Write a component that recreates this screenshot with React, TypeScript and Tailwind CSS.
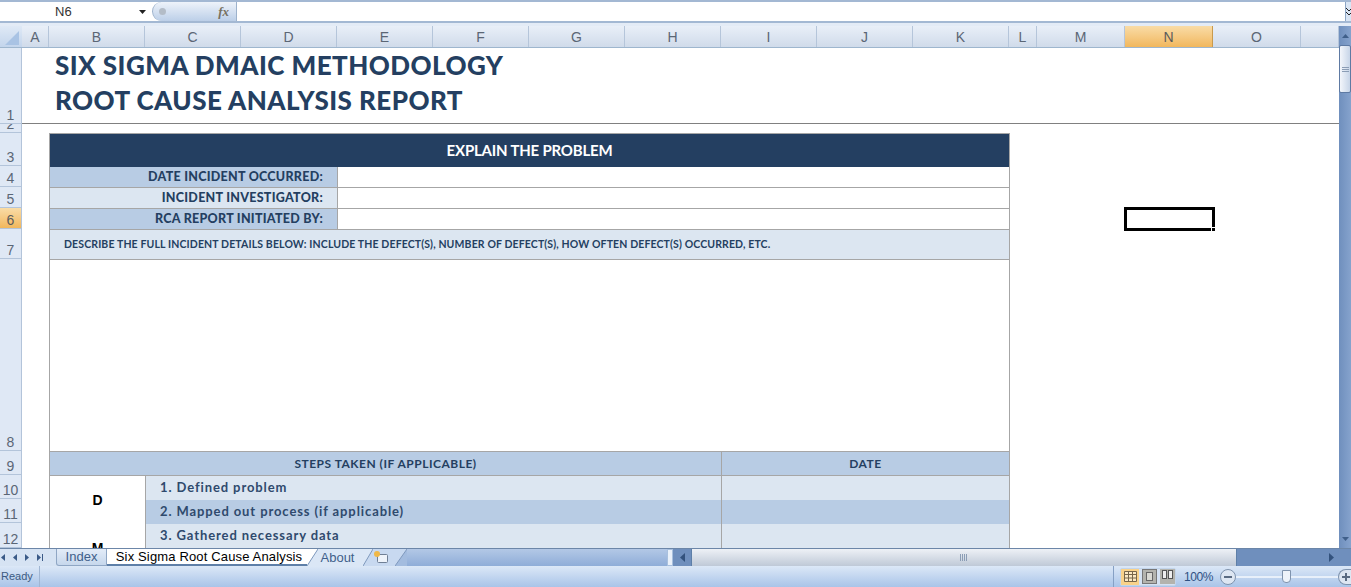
const columns = [
  { name: 'A', width: 'w-[27px]' },
  { name: 'B', width: 'w-[96px]' },
  { name: 'C', width: 'w-[96px]' },
  { name: 'D', width: 'w-[96px]' },
  { name: 'E', width: 'w-[96px]' },
  { name: 'F', width: 'w-[96px]' },
  { name: 'G', width: 'w-[96px]' },
  { name: 'H', width: 'w-[96px]' },
  { name: 'I', width: 'w-[96px]' },
  { name: 'J', width: 'w-[96px]' },
  { name: 'K', width: 'w-[96px]' },
  { name: 'L', width: 'w-[28px]' },
  { name: 'M', width: 'w-[88px]' },
  { name: 'N', width: 'w-[88px]' },
  { name: 'O', width: 'w-[88px]' },
  { name: '', width: 'w-[38px]' },
];

const rows = [
  { name: '1', height: 'h-[76px]' },
  { name: '2', height: 'h-[9px]' },
  { name: '3', height: 'h-[33px]' },
  { name: '4', height: 'h-[21px]' },
  { name: '5', height: 'h-[21px]' },
  { name: '6', height: 'h-[21px]' },
  { name: '7', height: 'h-[30px]' },
  { name: '8', height: 'h-[192px]' },
  { name: '9', height: 'h-[24px]' },
  { name: '10', height: 'h-[24px]' },
  { name: '11', height: 'h-[24px]' },
  { name: '12', height: 'h-[25px]' },
];

function FormulaBar() {
  return (
    <div className="h-[26px] bg-[#e3ebf6]">
      <div className="flex h-[23px] border-y-2 border-[#a3b8d3] bg-white">
        <div className="flex w-[152px] items-center pl-[55px] pt-[1px] text-[13px] text-[#333]">
          <span className="flex-1">N6</span>
          <svg width="7" height="4" viewBox="0 0 7 4" className="mr-[6px]">
            <path d="M0 0h7L3.500 4z" fill="#222" />
          </svg>
        </div>
        <div className="flex w-[85px] items-center rounded-l-[11px] border-x border-[#9db2cc] bg-gradient-to-b from-[#eef3fa] to-[#bccfe8] pl-[6px] pr-[7px]">
          <span className="h-[7px] w-[7px] rounded-full bg-[#b3bcc7]" />
          <span className="ml-auto font-['Liberation_Serif',serif] text-[13px] font-bold italic leading-none text-[#77715f]">fx</span>
        </div>
        <div className="flex-1" />
        <div className="flex w-[6px] items-center justify-center overflow-hidden border-l border-[#8ea6c4] bg-[#d9e5f4]">
          <svg width="6" height="10" viewBox="0 0 6 10" className="shrink-0">
            <path d="M0 1l3 3 3-3M0 5l3 3 3-3" stroke="#222" fill="none" />
          </svg>
        </div>
      </div>
    </div>
  );
}

function ColumnHeader() {
  return (
    <div className="flex h-[22px] border-b border-[#9eb6ce]">
      <div className="relative w-[22px] bg-gradient-to-b from-[#dfe9f6] to-[#c3d5ec]">
        <svg width="14" height="14" viewBox="0 0 14 14" className="absolute bottom-[2px] right-[3px]">
          <path d="M14 0v14H0z" fill="#a9c3e4" />
        </svg>
      </div>
      {columns.map((col) =>
        col.name === 'N' ? (
          <div
            key="N"
            className={`${col.width} flex items-center justify-center border-r border-[#c99a4d] bg-gradient-to-b from-[#f9dca6] to-[#f1b75c] pt-[1px] text-[14px] text-[#5b5b5b]`}
          >
            N
          </div>
        ) : (
          <div
            key={col.name || 'rest'}
            className={`${col.width} flex items-center justify-center border-r border-[#b5c5da] bg-gradient-to-b from-[#e9eff8] to-[#d0dbea] pt-[1px] text-[14px] text-[#5b6675]`}
          >
            {col.name}
          </div>
        ),
      )}
    </div>
  );
}

function RowHeader() {
  return (
    <div className="flex w-[22px] flex-col bg-[#dfe8f5]">
      {rows.map((row) => (
        <div
          key={row.name}
          className={`${row.height} flex shrink-0 items-end justify-center overflow-hidden border-b border-r border-[#b3c4da] pb-[1px] text-[14px] leading-[14px] ${
            row.name === '6' ? 'bg-gradient-to-b from-[#f9dca6] to-[#f1b75c] text-[#5b5b5b]' : 'text-[#5b6675]'
          }`}
        >
          {row.name}
        </div>
      ))}
    </div>
  );
}

function LabelRow({ label, dark }: { label: string; dark?: boolean }) {
  return (
    <div className="grid h-[21px] grid-cols-[287px_672px] border-b border-[#a6a6a6]">
      <div
        className={`flex items-center justify-end pr-[14px] text-[12.500px] font-black tracking-[0.27px] ${
          dark ? 'bg-[#b8cce4]' : 'bg-[#dce6f1]'
        }`}
      >
        {label}
      </div>
      <div className="border-l border-[#a6a6a6] bg-white" />
    </div>
  );
}

function StepCells({ text, dark }: { text: string; dark?: boolean }) {
  const fill = dark ? 'bg-[#b8cce4]' : 'bg-[#dce6f1]';
  return (
    <>
      <div className={`flex items-center border-l border-[#a6a6a6] pl-[14px] text-[13px] font-bold tracking-[0.9px] text-[#2f4a6d] ${fill}`}>
        {text}
      </div>
      <div className={`border-l border-[#a6a6a6] ${fill}`} />
    </>
  );
}

function Sheet() {
  return (
    <div className="relative flex-1 overflow-hidden bg-white font-['Lato',sans-serif] text-[#243f61]">
      <div className="h-[76px] border-b border-[#808080] pl-[33px] text-[26px] font-black leading-[35px] tracking-[0.45px]">
        <div>SIX SIGMA DMAIC METHODOLOGY</div>
        <div>ROOT CAUSE ANALYSIS REPORT</div>
      </div>
      <div className="ml-[27px] mt-[9px] w-[961px] border-x border-t border-[#a6a6a6]">
        <div className="flex h-[33px] items-center justify-center bg-[#243f61] text-[15px] font-bold tracking-[-0.2px] text-white">
          EXPLAIN THE PROBLEM
        </div>
        <LabelRow label="DATE INCIDENT OCCURRED:" dark />
        <LabelRow label="INCIDENT INVESTIGATOR:" />
        <LabelRow label="RCA REPORT INITIATED BY:" dark />
        <div className="flex h-[30px] items-center border-b border-[#a6a6a6] bg-[#dce6f1] pl-[14px] text-[10.500px] font-bold tracking-[0.13px]">
          DESCRIBE THE FULL INCIDENT DETAILS BELOW: INCLUDE THE DEFECT(S), NUMBER OF DEFECT(S), HOW OFTEN DEFECT(S) OCCURRED, ETC.
        </div>
        <div className="h-[192px] border-b border-[#a6a6a6] bg-white" />
        <div className="grid h-[24px] grid-cols-[671px_288px] border-b border-[#a6a6a6] bg-[#b8cce4] text-[12px] font-bold tracking-[0.5px]">
          <div className="flex items-center justify-center">STEPS TAKEN (IF APPLICABLE)</div>
          <div className="flex items-center justify-center border-l border-[#a6a6a6]">DATE</div>
        </div>
        <div className="grid grid-cols-[95px_576px_288px] grid-rows-[24px_24px_24px_24px]">
          <div className="row-span-2 flex items-center justify-center bg-white font-['Liberation_Sans',sans-serif] text-[14px] font-bold text-black">
            D
          </div>
          <StepCells text="1. Defined problem" />
          <StepCells text="2. Mapped out process (if applicable)" dark />
          <div className="row-span-2 flex items-center justify-center bg-white font-['Liberation_Sans',sans-serif] text-[14px] font-bold text-black">
            M
          </div>
          <StepCells text="3. Gathered necessary data" />
          <StepCells text="" dark />
        </div>
      </div>
      <div className="absolute left-[1102px] top-[159px] h-[24px] w-[91px] border-[3px] border-black">
        <div className="absolute -bottom-[4px] -right-[4px] h-[5px] w-[5px] border border-white bg-black" />
      </div>
    </div>
  );
}

function VerticalScrollbar() {
  return (
    <div className="flex w-[12px] flex-col bg-gradient-to-r from-[#6f8fbd] to-[#86a3cd]">
      <div className="flex h-[19px] items-center justify-center">
        <svg width="7" height="4" viewBox="0 0 7 4">
          <path d="M3.500 0L7 4H0z" fill="#3f5f8a" />
        </svg>
      </div>
      <div className="flex h-[48px] flex-col items-center justify-center gap-[1px] rounded-[2px] border border-[#5e7aa3] bg-gradient-to-r from-[#f3f6fb] to-[#c7d5e8]">
        <div className="h-px w-[7px] bg-[#8b9db5]" />
        <div className="h-px w-[7px] bg-[#8b9db5]" />
        <div className="h-px w-[7px] bg-[#8b9db5]" />
      </div>
      <div className="flex-1" />
      <div className="flex h-[18px] items-center justify-center">
        <svg width="7" height="4" viewBox="0 0 7 4">
          <path d="M0 0h7L3.500 4z" fill="#3f5f8a" />
        </svg>
      </div>
    </div>
  );
}

function NavArrows() {
  return (
    <div className="flex w-[56px] items-center gap-[8px] pl-[1px] text-[#3a5a87]">
      <svg width="4" height="7" viewBox="0 0 4 7"><path d="M4 0v7L0 3.500z" fill="currentColor" /></svg>
      <svg width="4" height="7" viewBox="0 0 4 7"><path d="M4 0v7L0 3.500z" fill="currentColor" /></svg>
      <svg width="4" height="7" viewBox="0 0 4 7"><path d="M0 0v7l4-3.500z" fill="currentColor" /></svg>
      <svg width="6" height="7" viewBox="0 0 6 7"><path d="M0 0v7l4-3.500zM5 0h1v7H5z" fill="currentColor" /></svg>
    </div>
  );
}

// slanted separator between two sheet tabs
function TabSlant({ width, left, right }: { width: number; left: string; right: string }) {
  return (
    <svg width={width} height="17" viewBox={`0 0 ${width} 17`} className="shrink-0">
      <path d={`M0 0H${width}L0 17z`} fill={left} />
      <path d={`M${width} 0V17H0z`} fill={right} />
      <path d={`M${width} 0L0 17`} stroke="#7f99bd" fill="none" />
    </svg>
  );
}

function TabBar() {
  return (
    <div className="flex h-[18px] border-t border-[#6c86a8] bg-[#d6e3f3] font-['Liberation_Sans',sans-serif]">
      <div className="flex w-[667px] shrink-0">
        <NavArrows />
        <div className="flex w-[51px] items-center justify-center rounded-bl-[3px] border-x border-b border-[#8fa6c4] bg-gradient-to-b from-[#e3ecf8] to-[#c6d7ec] text-[13px] text-[#3f5f8a]">
          Index
        </div>
        <div className="flex w-[200px] items-center justify-center whitespace-nowrap border-b-2 border-[#5e7fa8] bg-white pl-[4px] text-[13px] tracking-[0.15px] text-black">
          Six Sigma Root Cause Analysis
        </div>
        <TabSlant width={11} left="#ffffff" right="#dbe7f6" />
        <div className="flex w-[45px] items-center justify-center bg-[#dbe7f6] pr-[6px] text-[13px] text-[#3f5f8a]">
          About
        </div>
        <TabSlant width={10} left="#dbe7f6" right="#c8d9f0" />
        <div className="flex w-[22px] items-center bg-[#c8d9f0]">
          <svg width="16" height="15" viewBox="0 0 16 15">
            <rect x="4.500" y="4.500" width="10" height="8" rx="1" fill="#eef3fa" stroke="#6f7f95" />
            <circle cx="4" cy="4" r="3" fill="#f0b848" />
          </svg>
        </div>
        <TabSlant width={12} left="#c8d9f0" right="#a3bcdf" />
        <div className="flex-1 bg-gradient-to-b from-[#b3c8e6] to-[#8fadd8]" />
      </div>
      <div className="flex w-[6px] shrink-0 justify-center bg-[#6f8fbd]">
        <div className="w-[6px] border border-[#a8c0de] bg-[#eaf1fa]" />
      </div>
      <div className="flex w-[18px] shrink-0 items-center justify-center bg-[#6f8fbd] text-[#33527d]">
        <svg width="5" height="9" viewBox="0 0 5 9"><path d="M5 0v9L0 4.500z" fill="currentColor" /></svg>
      </div>
      <div className="flex w-[546px] shrink-0 items-center justify-center border-x border-[#5e7fa8] bg-gradient-to-b from-[#eef1f6] to-[#bfc9d7]">
        <div className="h-[7px] w-[8px] bg-[repeating-linear-gradient(90deg,#8b9db5_0,#8b9db5_1px,transparent_1px,transparent_2px)]" />
      </div>
      <div className="flex flex-1 items-center justify-end bg-[#6f8fbd] pr-[17px] text-[#33527d]">
        <svg width="5" height="9" viewBox="0 0 5 9"><path d="M0 0v9l5-4.500z" fill="currentColor" /></svg>
      </div>
    </div>
  );
}

function StatusBar() {
  return (
    <div className="flex h-[21px] items-center bg-gradient-to-b from-[#dce8f7] to-[#a9c4e8] font-['Liberation_Sans',sans-serif] text-[11px] text-[#3b5a82]">
      <div className="flex h-full w-[40px] items-center border-r border-[#a0b6d3] pl-[1px]">Ready</div>
      <div className="flex-1" />
      <div className="flex h-full items-center border-l border-[#86a0c4] pl-[6px]">
        <div className="flex h-[18px] w-[56px] items-center gap-[3px] rounded-[2px] border border-[#c2d4ea] bg-[#d5e2f2]">
          <div className="flex h-full w-[18px] items-center justify-center bg-[#f9d28a]">
            <svg width="13" height="11" viewBox="0 0 13 11">
              <path d="M.500.500h12v10H.500zM.500 3.500h12M.500 7h12M4.500.500v10M8.500.500v10" stroke="#77664a" fill="#fbe9c4" />
            </svg>
          </div>
          <div className="flex h-[15px] w-[15px] items-center justify-center border border-[#777] bg-[#b3b3ad]">
            <div className="h-[9px] w-[7px] border border-[#666] bg-[#d9d9d3]" />
          </div>
          <div className="flex h-[15px] w-[15px] items-start justify-center gap-[1px] bg-[#b3b3ad] pt-[1px]">
            <div className="h-[9px] w-[5px] border border-[#555] bg-[#eee]" />
            <div className="h-[9px] w-[5px] border border-[#555] bg-[#eee]" />
          </div>
        </div>
      </div>
      <div className="w-[44px] pl-[8px] text-[12px] tracking-[-0.4px] text-[#2f5183]">100%</div>
      <div className="flex h-full items-center">
        <div className="flex h-[16px] w-[16px] items-center justify-center rounded-full border border-[#7f93ad] bg-[#dde6f2]">
          <div className="h-[2px] w-[8px] bg-[#5a6b82]" />
        </div>
        <div className="relative h-[2px] w-[102px] bg-[#e8f0fa]">
          <div className="absolute -top-[6px] left-[46px] h-[13px] w-[9px] rounded-b-[4px] border border-[#7f93ad] bg-[#eef3fa]" />
        </div>
        <div className="relative h-[16px] w-[13px] overflow-hidden rounded-l-full border-y border-l border-[#7f93ad] bg-[#dde6f2]">
          <div className="absolute left-[3px] top-[6px] h-[2px] w-[8px] bg-[#5a6b82]" />
          <div className="absolute left-[6px] top-[3px] h-[8px] w-[2px] bg-[#5a6b82]" />
        </div>
      </div>
    </div>
  );
}

export default function App() {
  return (
    <div className="flex h-[587px] w-[1351px] flex-col overflow-hidden bg-white font-['Liberation_Sans',sans-serif]">
      <FormulaBar />
      <div className="flex h-[522px]">
        <div className="flex flex-1 flex-col overflow-hidden">
          <ColumnHeader />
          <div className="flex h-[500px] overflow-hidden">
            <RowHeader />
            <Sheet />
          </div>
        </div>
        <VerticalScrollbar />
      </div>
      <TabBar />
      <StatusBar />
    </div>
  );
}
